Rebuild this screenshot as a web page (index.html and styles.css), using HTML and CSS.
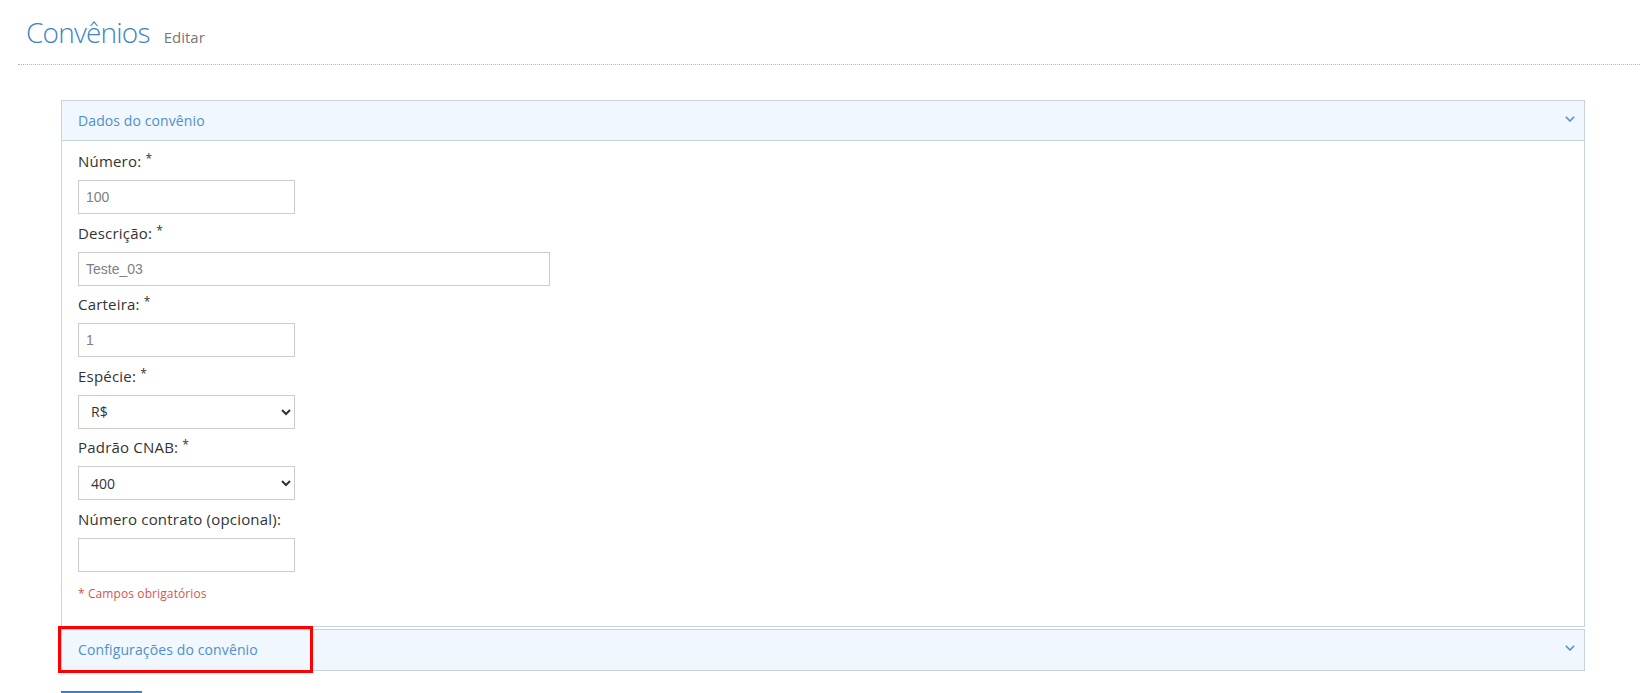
FILE: index.html
```html
<!DOCTYPE html>
<html lang="pt-BR">
<head>
<meta charset="utf-8">
<title>Convênios - Editar</title>
<link rel="stylesheet" href="styles.css">
</head>
<body>
<header class="page-header">
  <h1 class="page-title">Convênios<small class="page-sub">Editar</small></h1>
</header>
<main class="content">
  <div class="panel-group">
    <section class="panel">
      <div class="panel-heading">
        <span class="panel-title">Dados do convênio</span>
        <svg class="chev" width="10" height="6" viewBox="0 0 10 6"><polyline points="0.8,0.8 5,5 9.2,0.8" fill="none" stroke="#4a8fd6" stroke-width="1.5"/></svg>
      </div>
      <div class="panel-body">
        <div class="form-group">
          <label class="control-label">Número: <span class="req">*</span></label>
          <input class="form-control w-sm" type="text" value="100">
        </div>
        <div class="form-group">
          <label class="control-label">Descrição: <span class="req">*</span></label>
          <input class="form-control w-lg" type="text" value="Teste_03">
        </div>
        <div class="form-group">
          <label class="control-label">Carteira: <span class="req">*</span></label>
          <input class="form-control w-sm" type="text" value="1">
        </div>
        <div class="form-group">
          <label class="control-label">Espécie: <span class="req">*</span></label>
          <select class="form-select w-sm"><option>R$</option></select>
        </div>
        <div class="form-group">
          <label class="control-label">Padrão CNAB: <span class="req">*</span></label>
          <select class="form-select w-sm"><option>400</option><option>240</option></select>
        </div>
        <div class="form-group">
          <label class="control-label">Número contrato (opcional):</label>
          <input class="form-control w-sm" type="text" value="">
        </div>
        <p class="req-note">* Campos obrigatórios</p>
      </div>
    </section>
    <section class="panel panel-second">
      <div class="panel-heading panel-heading-collapsed">
        <span class="panel-title panel-title-long">Configurações do convênio</span>
        <svg class="chev" width="10" height="6" viewBox="0 0 10 6"><polyline points="0.8,0.8 5,5 9.2,0.8" fill="none" stroke="#4a8fd6" stroke-width="1.5"/></svg>
      </div>
      <div class="highlight-box"></div>
    </section>
  </div>
  <div class="actions"><button class="btn-primary" type="button" aria-label="Salvar"></button></div>
</main>
</body>
</html>
```
FILE: styles.css
```css
html, body {
  margin: 0;
  padding: 0;
  overflow: hidden;
  background: #fff;
}
body {
  font-family: "Open Sans", "Noto Sans", sans-serif;
  font-size: 14px;
  color: #333;
}
.page-header {
  margin-left: 18px;
  padding: 12px 0 7px 8px;
  border-bottom: 1px dotted #b5b5b5;
}
.page-title {
  margin: 0;
  font-size: 28px;
  line-height: 40px;
  font-weight: 300;
  letter-spacing: -0.8px;
  color: #3d85c6;
}
.page-sub {
  margin-left: 14px;
  font-size: 15px;
  font-weight: 400;
  letter-spacing: 0;
  color: #777;
}
.content {
  padding: 35px 55px 0 61px;
}
.panel {
  position: relative;
  border: 1px solid #c7d3df;
  background: #fff;
}
.panel-second {
  margin-top: 2px;
}
.panel-heading {
  display: flex;
  justify-content: space-between;
  align-items: flex-start;
  height: 40px;
  box-sizing: border-box;
  padding: 10px 9px 10px 16px;
  background: #f0f7fe;
  border-bottom: 1px solid #c7d3df;
}
.panel-heading-collapsed {
  border-bottom: 0;
}
.panel-title {
  font-size: 14px;
  line-height: 20px;
  letter-spacing: 0.1px;
  color: #4f8fcb;
}
.panel-title-long {
  letter-spacing: 0.12px;
}
.chev {
  display: block;
  margin-top: 5px;
}
.panel-body {
  padding: 10px 16px 24.5px 16px;
}
.form-group {
  margin-bottom: 8.6px;
}
.control-label {
  display: block;
  font-size: 15px;
  line-height: 20px;
  letter-spacing: 0.2px;
  margin-bottom: 9px;
  color: #333;
}
.req {
  font-size: 12px;
  line-height: 10px;
  position: relative;
  top: -4px;
}
.form-control, .form-select {
  display: block;
  box-sizing: border-box;
  height: 34px;
  border: 1px solid #cccccc;
  border-radius: 0;
  background: #fff;
  margin: 0;
  outline: none;
}
.form-control {
  padding: 0 7px;
  font-family: "Liberation Sans", Arial, sans-serif;
  font-size: 14px;
  color: #7f7f7f;
}
.form-select {
  padding: 0 4px 0 8px;
  font-family: "Open Sans", "Noto Sans", sans-serif;
  font-size: 14px;
  color: #333;
}
.w-sm { width: 217px; }
.w-lg { width: 472px; }
.req-note {
  margin: 14px 0 0;
  font-size: 12px;
  line-height: 16px;
  letter-spacing: 0.1px;
  color: #d9534f;
}
.highlight-box {
  position: absolute;
  left: -4px;
  top: -4px;
  width: 255px;
  height: 47px;
  box-sizing: border-box;
  border: 3px solid #ff0000;
  pointer-events: none;
}
.actions {
  margin-top: 20px;
}
.btn-primary {
  display: block;
  width: 81px;
  height: 34px;
  border: 1px solid #2e7cc4;
  background: #3a8ad6;
  padding: 0;
}
```
